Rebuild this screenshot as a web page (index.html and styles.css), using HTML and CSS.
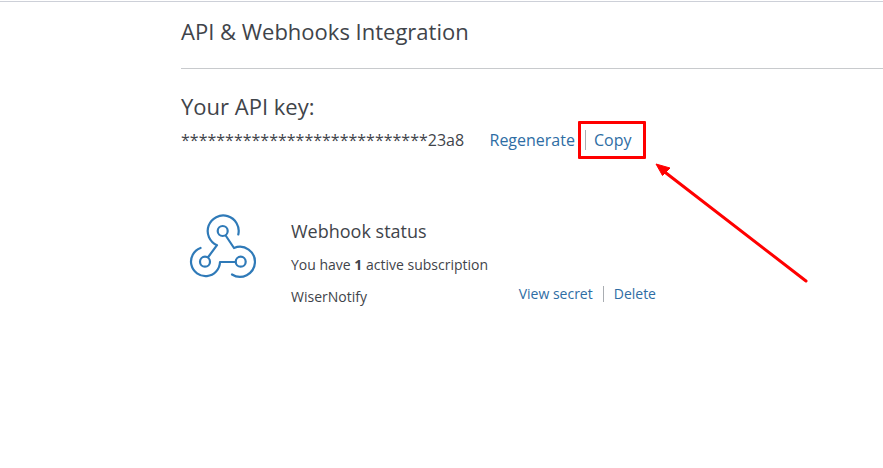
FILE: index.html
```html
<!DOCTYPE html>
<html lang="en">
<head>
<meta charset="utf-8">
<title>API &amp; Webhooks Integration</title>
<link rel="stylesheet" href="styles.css">
</head>
<body>
<main class="page">
  <h1 class="title">API &amp; Webhooks Integration</h1>
  <section class="key">
    <h2 class="key-label">Your API key:</h2>
    <div class="key-row">
      <span class="key-value">****************************23a8</span>
      <a class="link" href="#">Regenerate</a>
      <span class="sep"></span>
      <a class="link" href="#">Copy</a>
    </div>
  </section>
  <section class="hook">
    <svg class="hook-icon" viewBox="0 0 90 80" width="90" height="80" fill="none" stroke="#2f7ab8" stroke-width="2.2" stroke-linecap="round" stroke-linejoin="round">
      <circle cx="42.7" cy="25" r="5"/>
      <circle cx="25" cy="55.7" r="5"/>
      <circle cx="60.7" cy="55.7" r="5"/>
      <path d="M58.3 28.500A15.500 15.500 0 1 0 37 39.200L28.200 51"/>
      <path d="M46 30L54 42A15 15 0 1 1 52 68.500"/>
      <path d="M20.500 42A14.500 14.500 0 1 0 40 56H55.600"/>
    </svg>
    <div class="hook-body">
      <h3 class="hook-title">Webhook status</h3>
      <p class="hook-count">You have <b>1</b> active subscription</p>
      <div class="sub-row">
        <span class="sub-name">WiserNotify</span>
        <span class="sub-actions">
          <a class="link-sm" href="#">View secret</a>
          <span class="sep-sm"></span>
          <a class="link-sm" href="#">Delete</a>
        </span>
      </div>
    </div>
  </section>
  <div class="mark-box"></div>
  <svg class="mark-arrow" viewBox="0 0 170 130" width="170" height="130" fill="none">
    <path d="M16 13L156 121" stroke="#ff0000" stroke-width="3" stroke-linecap="round"/>
    <path d="M6 4L20 8L12.500 15.500Z" fill="#ff0000" stroke="#ff0000"/>
  </svg>
</main>
</body>
</html>
```

FILE: styles.css
```css
* { box-sizing: border-box; }
html, body { margin: 0; padding: 0; background: #fff; }
body {
  width: 883px;
  height: 468px;
  overflow: hidden;
  font-family: "Open Sans", sans-serif;
  color: #3f444a;
  padding-top: 1px;
}
.page {
  position: relative;
  height: 467px;
  border-top: 1px solid #cdd0d8;
  padding-left: 181px;
}
.title {
  margin: 0;
  height: 67px;
  padding-top: 13px;
  border-bottom: 1px solid #c8cacd;
  font-size: 22px;
  line-height: 32px;
  font-weight: 400;
}
.key { padding-top: 22px; }
.key-label {
  margin: 0;
  font-size: 22px;
  line-height: 30px;
  font-weight: 400;
}
.key-row {
  display: flex;
  align-items: center;
  height: 28px;
  margin-top: 5px;
  font-size: 16px;
}
.key-value { width: 308.500px; }
.link { color: #2e6da4; text-decoration: none; }
.sep {
  width: 1px;
  height: 20px;
  margin: 0 8px 0 10px;
  background: #a9adb2;
}
.hook {
  display: flex;
  margin-top: 63px;
}
.hook-icon { margin: -11px 0 0 -1px; flex: none; }
.hook-body { width: 365px; margin-left: 21px; }
.hook-title {
  margin: 0;
  font-size: 18px;
  line-height: 28px;
  font-weight: 400;
}
.hook-count {
  margin: 8px 0 0;
  font-size: 14px;
  line-height: 24px;
}
.hook-count b { font-weight: 700; }
.sub-row {
  display: flex;
  justify-content: space-between;
  margin-top: 8px;
  font-size: 14px;
  line-height: 24px;
}
.sub-actions { display: flex; align-items: center; height: 24px; margin-top: -3px; }
.link-sm { color: #2e6da4; text-decoration: none; }
.sep-sm {
  width: 1px;
  height: 16px;
  margin: 0 10px;
  background: #a9adb2;
}
.mark-box {
  position: absolute;
  left: 578px;
  top: 119px;
  width: 68px;
  height: 38px;
  border: 3px solid #ff0000;
  border-radius: 1px;
}
.mark-arrow {
  position: absolute;
  left: 650px;
  top: 158px;
}
```
